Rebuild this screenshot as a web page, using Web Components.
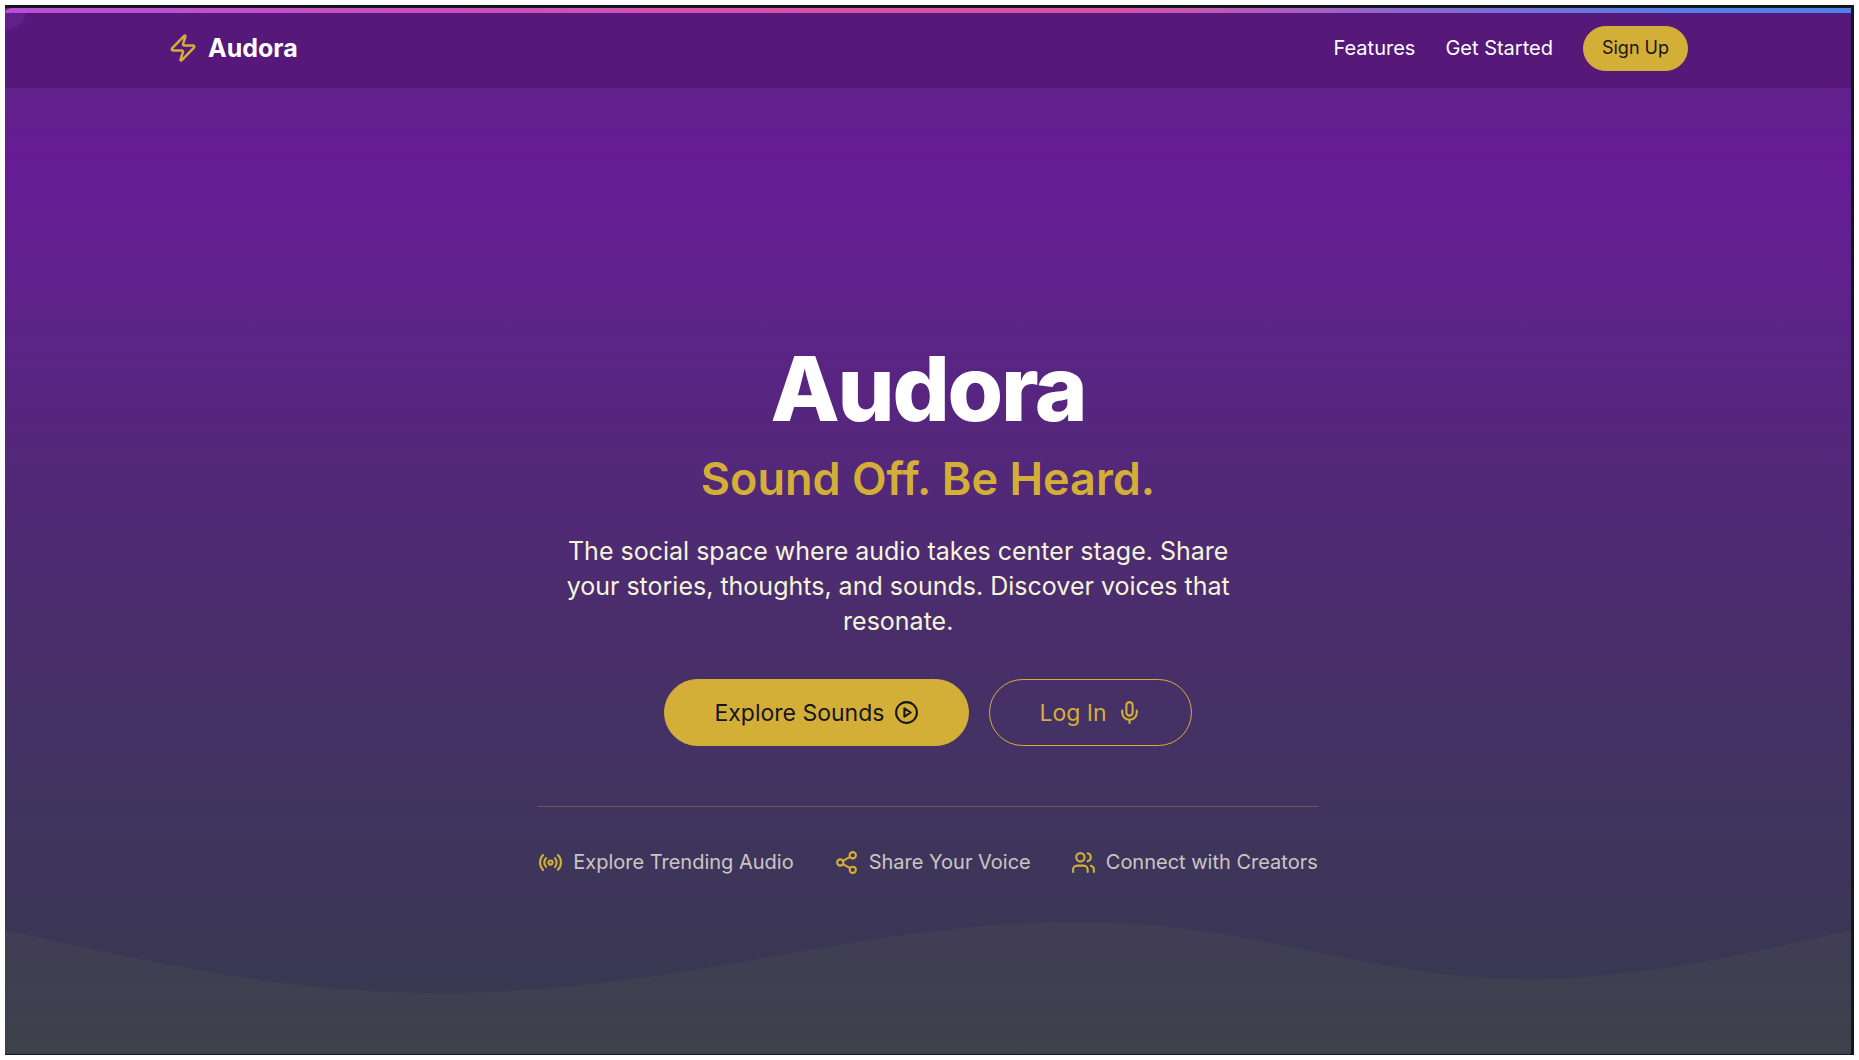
<!DOCTYPE html>
<html lang="en">
<head>
<meta charset="UTF-8">
<meta name="viewport" content="width=device-width, initial-scale=1.0">
<title>Audora</title>
<style>
  body {
    margin: 0;
    background: #fff;
    font-family: Inter, sans-serif;
    --gold: #d4af37;
    --ivory: #f5f5dc;
    --ink: #16161d;
  }
</style>
</head>
<body>
<audora-app></audora-app>

<script>
// lucide style icons, 24x24 stroke
const icons = {
  zap: '<path d="M4 14a1 1 0 0 1-.78-1.63l9.9-10.2a.5.5 0 0 1 .86.46l-1.92 6.02A1 1 0 0 0 13 10h7a1 1 0 0 1 .78 1.63l-9.9 10.2a.5.5 0 0 1-.86-.46l1.92-6.02A1 1 0 0 0 11 14z"/>',
  play: '<circle cx="12" cy="12" r="10"/><polygon points="10 8 16 12 10 16 10 8"/>',
  mic: '<path d="M12 2a3 3 0 0 0-3 3v7a3 3 0 0 0 6 0V5a3 3 0 0 0-3-3Z"/><path d="M19 10v2a7 7 0 0 1-14 0v-2"/><path d="M12 19v3"/>',
  radio: '<path d="M4.9 19.1C1 15.2 1 8.8 4.9 4.9"/><path d="M7.8 16.2c-2.3-2.3-2.3-6.1 0-8.5"/><circle cx="12" cy="12" r="2"/><path d="M16.2 7.8c2.3 2.3 2.3 6.1 0 8.5"/><path d="M19.1 4.9C23 8.8 23 15.1 19.1 19"/>',
  share: '<circle cx="18" cy="5" r="3"/><circle cx="6" cy="12" r="3"/><circle cx="18" cy="19" r="3"/><path d="M8.59 13.51l6.83 3.98"/><path d="M15.41 6.51l-6.82 3.98"/>',
  users: '<path d="M16 21v-2a4 4 0 0 0-4-4H6a4 4 0 0 0-4 4v2"/><circle cx="9" cy="7" r="4"/><path d="M22 21v-2a4 4 0 0 0-3-3.87"/><path d="M16 3.13a4 4 0 0 1 0 7.75"/>'
};

// every element just stamps its markup into an open shadow root
class Base extends HTMLElement {
  constructor() {
    super();
    this.attachShadow({ mode: "open" });
  }
  connectedCallback() {
    const t = document.createElement("template");
    t.innerHTML = this.render();
    this.shadowRoot.replaceChildren(t.content.cloneNode(true));
  }
}

class AudoraIcon extends Base {
  render() {
    return `
<style>
  :host { display: block; flex: none; width: 25px; height: 25px; }
  svg { display: block; width: 100%; height: 100%; }
</style>
<svg viewBox="0 0 24 24" fill="none" stroke="currentColor" stroke-width="2" stroke-linecap="round" stroke-linejoin="round" aria-hidden="true">${icons[this.getAttribute("name")]}</svg>`;
  }
}

class AudoraButton extends Base {
  render() {
    return `
<style>
  :host { display: block; }
  button {
    display: flex;
    align-items: center;
    gap: 10px;
    box-sizing: border-box;
    height: 67px;
    padding: 0 49px;
    border: 1px solid var(--gold);
    border-radius: 34px;
    background: var(--gold);
    color: var(--ink);
    font: 400 23px/32px Inter, sans-serif;
    white-space: nowrap;
    cursor: pointer;
  }
  :host([variant="outline"]) button { background: transparent; color: var(--gold); }
  :host([variant="small"]) button {
    height: 45px;
    padding: 0 18px;
    font-size: 18px;
  }
</style>
<button type="button"><slot></slot></button>`;
  }
}

class AudoraHeader extends Base {
  render() {
    return `
<style>
  :host { display: block; background: rgba(78, 20, 108, 0.6); }
  .bar {
    display: flex;
    align-items: center;
    justify-content: space-between;
    box-sizing: border-box;
    height: 75px;
    padding: 0 163px;
    padding-bottom: 5px;
  }
  .logo {
    display: flex;
    align-items: center;
    gap: 10px;
    color: #fff;
    font-size: 25px;
    font-weight: 700;
    line-height: 35px;
    text-decoration: none;
  }
  .logo audora-icon { width: 30px; height: 30px; color: var(--gold); }
  nav { display: flex; align-items: center; gap: 30px; }
  nav a {
    color: #fff;
    font-size: 20px;
    line-height: 30px;
    text-decoration: none;
  }
</style>
<header class="bar">
  <a class="logo" href="#"><audora-icon name="zap"></audora-icon><span>Audora</span></a>
  <nav>
    <a href="#features">Features</a>
    <a href="#start">Get Started</a>
    <audora-button variant="small">Sign Up</audora-button>
  </nav>
</header>`;
  }
}

class AudoraFeature extends Base {
  render() {
    return `
<style>
  :host {
    display: flex;
    align-items: center;
    gap: 10px;
    color: rgba(245, 235, 225, 0.8);
    font-size: 20px;
    line-height: 30px;
    white-space: nowrap;
  }
  audora-icon { color: var(--gold); }
</style>
<audora-icon name="${this.getAttribute("icon")}"></audora-icon>
<span><slot></slot></span>`;
  }
}

class AudoraHero extends Base {
  render() {
    return `
<style>
  :host { display: flex; justify-content: center; padding: 256px 20px 40px; }
  section { text-align: center; }
  h1 {
    margin: 0;
    color: #fff;
    font-size: 90px;
    font-weight: 800;
    line-height: 90px;
    letter-spacing: -0.025em;
  }
  h2 {
    margin: 20px 0 0;
    color: var(--gold);
    font-size: 45px;
    font-weight: 600;
    line-height: 50px;
  }
  p {
    max-width: 720px;
    margin: 30px 0 0;
    color: var(--ivory);
    font-size: 25px;
    line-height: 35px;
  }
  .actions { display: flex; justify-content: center; gap: 20px; margin-top: 40px; }
  .features {
    display: flex;
    justify-content: center;
    gap: 40px;
    margin-top: 60px;
    padding-top: 40px;
    border-top: 1px solid rgba(212, 155, 70, 0.35);
  }
</style>
<section>
  <h1>Audora</h1>
  <h2>Sound Off. Be Heard.</h2>
  <p>The social space where audio takes center stage. Share your stories, thoughts, and sounds. Discover voices that resonate.</p>
  <div class="actions">
    <audora-button>Explore Sounds <audora-icon name="play"></audora-icon></audora-button>
    <audora-button variant="outline">Log In <audora-icon name="mic"></audora-icon></audora-button>
  </div>
  <div class="features">
    <audora-feature icon="radio">Explore Trending Audio</audora-feature>
    <audora-feature icon="share">Share Your Voice</audora-feature>
    <audora-feature icon="users">Connect with Creators</audora-feature>
  </div>
</section>`;
  }
}

class AudoraWave extends Base {
  render() {
    return `
<style>
  :host { display: block; height: 132px; }
  svg { display: block; width: 100%; height: 100%; }
</style>
<svg viewBox="0 0 1846 132" preserveAspectRatio="none" aria-hidden="true">
  <path fill="#8c9448" fill-opacity="0.08" d="M0 8C140 39 280 71 430 71C680 71 850 0 1073 0C1250 0 1360 57 1523 57C1640 57 1745 31 1846 8V132H0Z"/>
</svg>`;
  }
}

class AudoraApp extends Base {
  render() {
    return `
<style>
  :host { display: block; box-sizing: border-box; min-height: 100vh; padding: 5px; }
  .frame {
    position: relative;
    display: flex;
    flex-direction: column;
    box-sizing: border-box;
    min-height: calc(100vh - 10px);
    border: solid var(--ink);
    border-width: 3px 3px 1px 0;
    background: linear-gradient(#62208e, #62208d 10%, #661b95 14%, #61208e 24%, #5a2484 33%, #4c2c6f 55%, #40345f 76%, #3b3656 88%, #373b4c);
    overflow: hidden;
  }
  .strip {
    position: relative;
    z-index: 1;
    height: 5px;
    border-top-left-radius: 8px 5px;
    background: linear-gradient(90deg, #b94fd8, #dc50a8 45%, #dc50a8 60%, #8a68d0 76%, #4f7fe8 92%);
  }
  /* disc peeking out of the top left corner */
  .disc {
    position: absolute;
    top: -22px;
    left: -22px;
    width: 44px;
    height: 44px;
    border-radius: 50%;
    background: #63208d;
  }
  audora-wave { margin-top: auto; }
</style>
<div class="frame">
  <div class="strip"></div>
  <audora-header></audora-header>
  <audora-hero></audora-hero>
  <audora-wave></audora-wave>
  <div class="disc"></div>
</div>`;
  }
}

customElements.define("audora-icon", AudoraIcon);
customElements.define("audora-button", AudoraButton);
customElements.define("audora-header", AudoraHeader);
customElements.define("audora-feature", AudoraFeature);
customElements.define("audora-hero", AudoraHero);
customElements.define("audora-wave", AudoraWave);
customElements.define("audora-app", AudoraApp);
</script>
</body>
</html>
